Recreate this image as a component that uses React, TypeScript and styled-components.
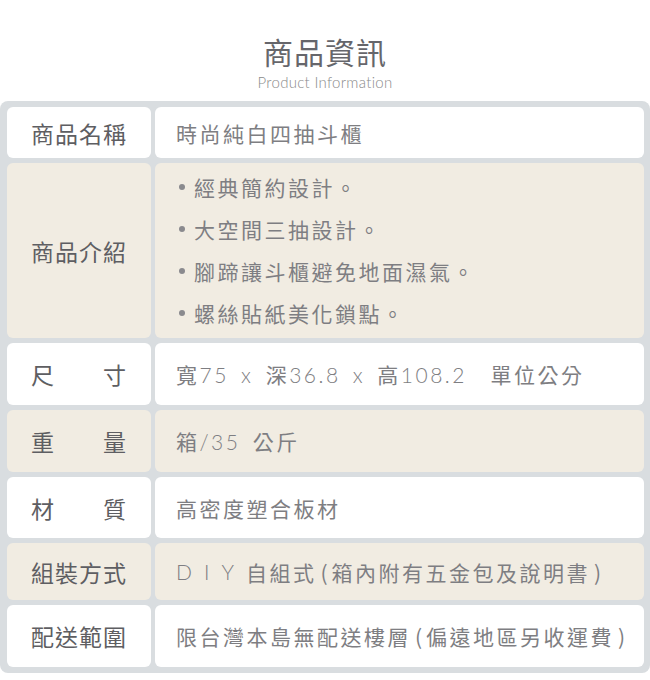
import styled, { createGlobalStyle } from 'styled-components';

const GlobalStyle = createGlobalStyle`
  html, body { margin: 0; padding: 0; background: #fff; }
  body {
    width: 650px;
    font-family: 'Noto Sans CJK TC', 'Noto Sans', sans-serif;
  }
`;

const Header = styled.header`
  padding-top: 35px;
  margin-bottom: 11px;
  text-align: center;
`;

const Title = styled.h1`
  margin: 0;
  font-size: 30px;
  line-height: 32px;
  font-weight: 400;
  color: #66666b;
  letter-spacing: 1px;
`;

const Subtitle = styled.p`
  margin: 7px 0 0;
  font-family: 'Lato', 'Liberation Sans', sans-serif;
  font-weight: 300;
  font-size: 15px;
  line-height: 16px;
  color: #8a8a8a;
  letter-spacing: 0.3px;
`;

const Panel = styled.section`
  background: #d9dde0;
  border-radius: 8px;
  padding: 6px 6px 6px 7px;
  display: flex;
  flex-direction: column;
  gap: 5px;
`;

const Row = styled.div<{ $h: number }>`
  display: grid;
  grid-template-columns: 144px 1fr;
  gap: 4px;
  height: ${p => p.$h}px;
`;

const Cell = styled.div<{ $cream?: boolean }>`
  background: ${p => (p.$cream ? '#f1ece2' : '#ffffff')};
  border-radius: 6px;
  display: flex;
  align-items: center;
`;

const LabelCell = styled(Cell)`
  justify-content: center;
`;

const LabelText = styled.span<{ $spread?: boolean }>`
  display: flex;
  justify-content: ${p => (p.$spread ? 'space-between' : 'center')};
  width: 96px;
  font-size: 23px;
  color: #5e5e62;
  letter-spacing: 1px;
  white-space: nowrap;
`;

const ValueCell = styled(Cell)`
  padding-left: 21px;
  font-size: 21px;
  color: #7e7e82;
  letter-spacing: 2.5px;
  white-space: pre;
`;

const Latin = styled.span<{ $ls?: number }>`
  font-family: 'Lato', 'Liberation Sans', sans-serif;
  font-weight: 300;
  word-spacing: 4px;
  letter-spacing: ${p => p.$ls ?? 2.5}px;
`;

const Paren = styled.span`
  display: inline-block;
  width: 15px;
  text-align: center;
  letter-spacing: 0;
`;

const List = styled.ul`
  margin: 0;
  padding: 3px 0 0;
  list-style: none;
  align-self: flex-start;
`;

const Item = styled.li`
  display: flex;
  align-items: center;
  line-height: 42px;
  &::before {
    content: '';
    width: 6px;
    height: 6px;
    border-radius: 50%;
    background: #8a8a8e;
    margin: 0 9px 0 3px;
  }
`;

const points = ['經典簡約設計。', '大空間三抽設計。', '腳蹄讓斗櫃避免地面濕氣。', '螺絲貼紙美化鎖點。'];

export default function App() {
  return (
    <>
      <GlobalStyle />
      <Header>
        <Title>商品資訊</Title>
        <Subtitle>Product Information</Subtitle>
      </Header>
      <Panel>
        <Row $h={51}>
          <LabelCell><LabelText>商品名稱</LabelText></LabelCell>
          <ValueCell>時尚純白四抽斗櫃</ValueCell>
        </Row>
        <Row $h={175}>
          <LabelCell $cream><LabelText>商品介紹</LabelText></LabelCell>
          <ValueCell $cream>
            <List>
              {points.map(p => <Item key={p}>{p}</Item>)}
            </List>
          </ValueCell>
        </Row>
        <Row $h={62}>
          <LabelCell><LabelText $spread><span>尺</span><span>寸</span></LabelText></LabelCell>
          <ValueCell>
            寬<Latin>{'75 x '}</Latin>深<Latin>{'36.8 x '}</Latin>高<Latin>108.2</Latin>{'　'}單位公分
          </ValueCell>
        </Row>
        <Row $h={62}>
          <LabelCell $cream><LabelText $spread><span>重</span><span>量</span></LabelText></LabelCell>
          <ValueCell $cream>箱<Latin>{'/35 '}</Latin>公斤</ValueCell>
        </Row>
        <Row $h={61}>
          <LabelCell><LabelText $spread><span>材</span><span>質</span></LabelText></LabelCell>
          <ValueCell>高密度塑合板材</ValueCell>
        </Row>
        <Row $h={57}>
          <LabelCell $cream><LabelText>組裝方式</LabelText></LabelCell>
          <ValueCell $cream>
            <Latin $ls={12}>DIY</Latin>自組式<Paren>(</Paren>箱內附有五金包及說明書<Paren>)</Paren>
          </ValueCell>
        </Row>
        <Row $h={62}>
          <LabelCell><LabelText>配送範圍</LabelText></LabelCell>
          <ValueCell>
            限台灣本島無配送樓層<Paren>(</Paren>偏遠地區另收運費<Paren>)</Paren>
          </ValueCell>
        </Row>
      </Panel>
    </>
  );
}
